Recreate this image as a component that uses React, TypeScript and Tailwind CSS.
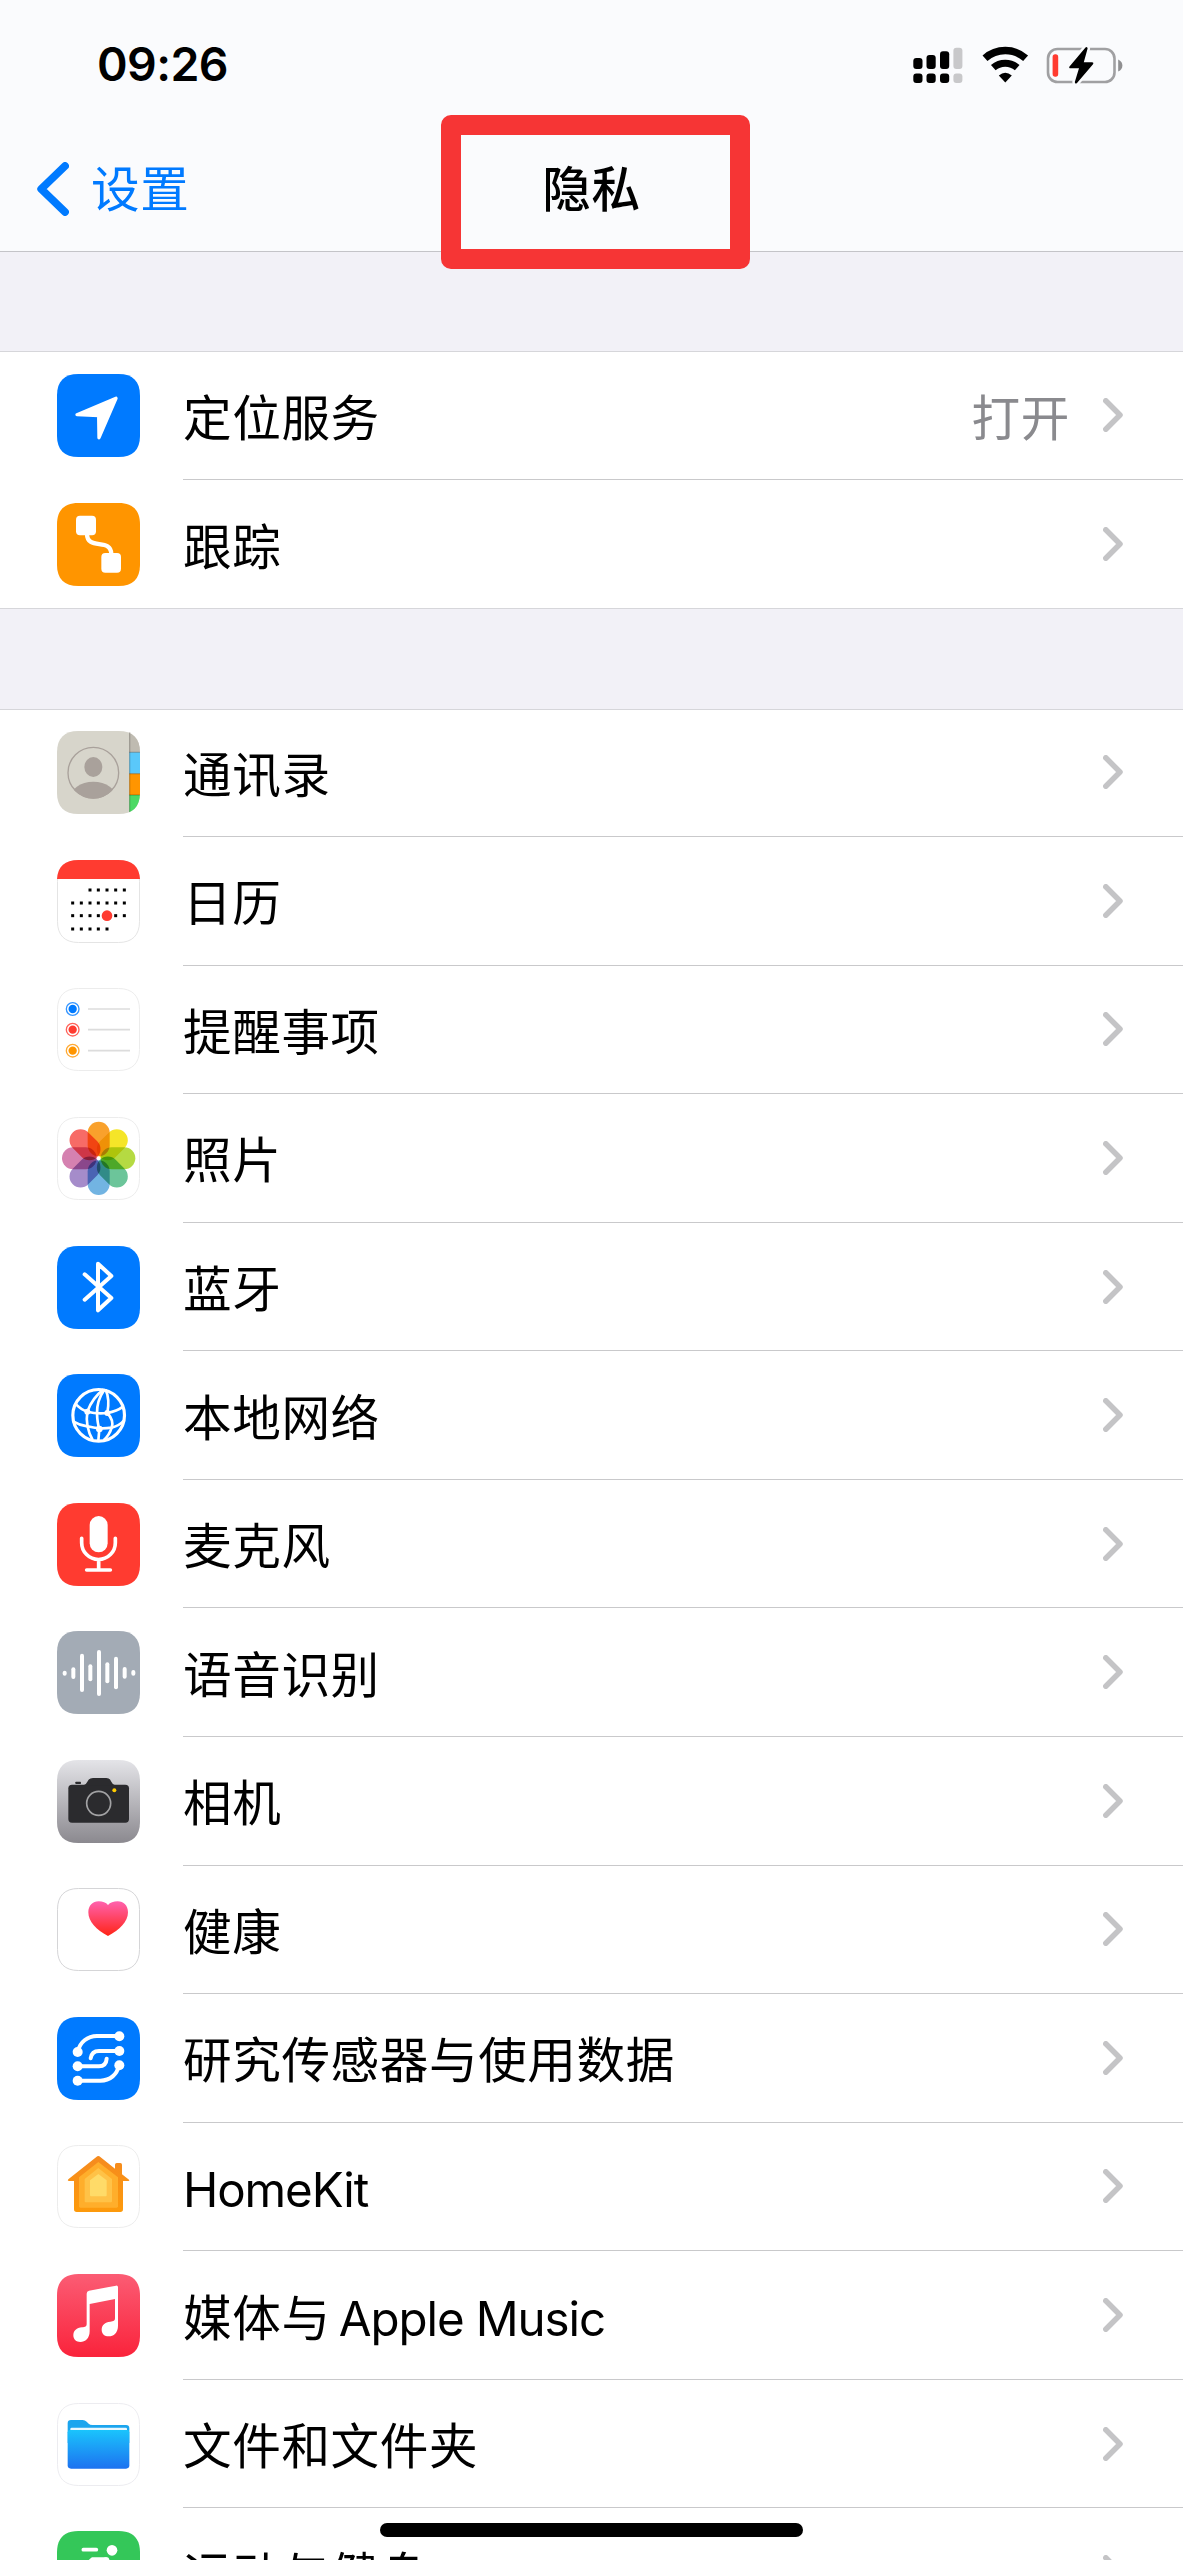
import type { ReactNode } from "react";

const TILE =
  "M64 0H185C227 0 249 22 249 64V185C249 227 227 249 185 249H64C22 249 0 227 0 185V64C0 22 22 0 64 0Z";

interface TileProps {
  fill?: string;
  outline?: string;
  children?: ReactNode;
}

function Tile({ fill = "#ffffff", outline, children }: TileProps) {
  return (
    <svg viewBox="0 0 249 249" className="size-[83px] shrink-0" fill="none">
      <path d={TILE} fill={fill} />
      {children}
      {outline && (
        <path
          d={TILE}
          stroke={outline}
          strokeWidth="3"
          transform="translate(1.5 1.5) scale(0.988)"
        />
      )}
    </svg>
  );
}

function LocationIcon() {
  return (
    <Tile fill="#007aff">
      <path
        d="M60 122L177 73L126 191L125 125Z"
        fill="#fff"
        stroke="#fff"
        strokeWidth="10"
        strokeLinejoin="round"
      />
    </Tile>
  );
}

function TrackingIcon() {
  return (
    <Tile fill="#ff9500">
      <rect x="57" y="38" width="60" height="59" rx="12" fill="#fff" />
      <rect x="133" y="150" width="59" height="59" rx="12" fill="#fff" />
      <path d="M90 92C90 145 163 102 163 154" stroke="#fff" strokeWidth="13" />
    </Tile>
  );
}

function ContactsIcon() {
  return (
    <Tile fill="#d7d5cb">
      <defs>
        <clipPath id="contacts-tile">
          <path d={TILE} />
        </clipPath>
        <clipPath id="contacts-face">
          <circle cx="109" cy="125" r="78" />
        </clipPath>
      </defs>
      <g clipPath="url(#contacts-tile)">
        <rect x="217" y="0" width="32" height="64" fill="#bfbbb1" />
        <rect x="217" y="64" width="32" height="64" fill="#5ac8fa" />
        <rect x="217" y="128" width="32" height="64" fill="#ff9500" />
        <rect x="217" y="192" width="32" height="57" fill="#4cd964" />
        <rect x="217" y="62" width="32" height="4" fill="#000" opacity="0.2" />
        <rect x="217" y="126" width="32" height="4" fill="#000" opacity="0.2" />
        <rect x="217" y="190" width="32" height="4" fill="#000" opacity="0.2" />
        <rect x="216" y="0" width="4" height="249" fill="#000" opacity="0.2" />
      </g>
      <circle cx="109" cy="125" r="76" stroke="#a9a19b" strokeWidth="4" />
      <ellipse cx="109" cy="108" rx="27" ry="30" fill="#a9a19b" />
      <ellipse
        cx="109"
        cy="203"
        rx="70"
        ry="51"
        fill="#a9a19b"
        clipPath="url(#contacts-face)"
      />
    </Tile>
  );
}

const CALENDAR_ROWS = [
  { y: 90, xs: [99, 124, 150, 176, 202] },
  { y: 129, xs: [47, 73, 99, 124, 150, 176, 202] },
  { y: 167, xs: [47, 73, 99, 124, 176, 202] },
  { y: 207, xs: [47, 73, 99, 124, 150] },
];

function CalendarIcon() {
  return (
    <Tile>
      <path
        d={TILE}
        stroke="#e4e4e4"
        strokeWidth="3"
        transform="translate(1.5 1.5) scale(0.988)"
      />
      <path d="M64 0H185C225 0 247 20 249 57H0C2 20 24 0 64 0Z" fill="#ff3b30" />
      {CALENDAR_ROWS.map((row) =>
        row.xs.map((x) => (
          <rect key={`${x}-${row.y}`} x={x - 4.5} y={row.y - 4.5} width="9" height="9" fill="#000" />
        ))
      )}
      <circle cx="150" cy="167" r="16" fill="#ff3b30" />
    </Tile>
  );
}

function RemindersIcon() {
  return (
    <Tile outline="#ececec">
      {[
        { y: 63, color: "#007aff" },
        { y: 125, color: "#ff3b30" },
        { y: 188, color: "#ff9500" },
      ].map(({ y, color }) => (
        <g key={color}>
          <circle cx="47" cy={y} r="19" stroke={color} strokeWidth="4" opacity="0.8" />
          <circle cx="47" cy={y} r="12.5" fill={color} />
          <path d={`M93 ${y}H219`} stroke="#dcdcdc" strokeWidth="5" />
        </g>
      ))}
    </Tile>
  );
}

const PETALS = [
  "#f9a12c",
  "#f5e528",
  "#b5da42",
  "#6cc59a",
  "#72b4e2",
  "#a58cca",
  "#d581b0",
  "#f76b66",
];

function PhotosIcon() {
  return (
    <Tile outline="#ececec">
      <g className="isolate">
        {PETALS.map((color, i) => (
          <rect
            key={color}
            x="92"
            y="14"
            width="66"
            height="104"
            rx="33"
            fill={color}
            transform={`rotate(${i * 45} 125 124)`}
            className="mix-blend-multiply"
          />
        ))}
      </g>
    </Tile>
  );
}

function BluetoothIcon() {
  return (
    <Tile fill="#007aff">
      <path
        d="M83 85L163 156L123 193V53L163 90L83 161"
        stroke="#fff"
        strokeWidth="12"
        strokeLinecap="round"
        strokeLinejoin="round"
      />
    </Tile>
  );
}

function NetworkIcon() {
  return (
    <Tile fill="#007aff">
      <g stroke="#fff" strokeWidth="8">
        <circle cx="125" cy="124" r="77.5" strokeWidth="9.5" />
        <path d="M54 88Q72 107 91 113Q121 121 151 117Q180 112 198 98" />
        <path d="M48 142Q68 154 91 157Q127 167 164 161Q188 155 202 138" />
        <path d="M139 47Q106 72 91 113Q84 157 107 198" />
        <path d="M142 47Q119 80 120 118Q121 148 127 165L124 200" />
        <path d="M146 47Q159 76 151 117Q172 140 164 161Q158 182 140 199" />
      </g>
      <g fill="#fff">
        <circle cx="91" cy="113" r="9" />
        <circle cx="151" cy="117" r="9" />
        <circle cx="127" cy="165" r="10" />
      </g>
    </Tile>
  );
}

function MicrophoneIcon() {
  return (
    <Tile fill="#ff3b30">
      <rect x="98" y="39" width="54" height="109" rx="27" fill="#fff" />
      <path
        d="M74 106V119A50.5 50.5 0 0 0 175 119V106M125 170V201M89 201H160"
        stroke="#fff"
        strokeWidth="11"
        strokeLinecap="round"
      />
    </Tile>
  );
}

const WAVE_BARS = [
  [23, 119, 134],
  [49, 109, 144],
  [75, 68, 183],
  [100, 100, 151],
  [126, 57, 195],
  [151, 94, 157],
  [177, 77, 175],
  [203, 108, 143],
  [229, 117, 134],
];

function SpeechIcon() {
  return (
    <Tile fill="#a3abb5">
      {WAVE_BARS.map(([x, top, bottom]) => (
        <rect key={x} x={x - 6} y={top} width="12" height={bottom - top} rx="6" fill="#fff" />
      ))}
    </Tile>
  );
}

function CameraIcon() {
  return (
    <Tile fill="url(#camera-bg)">
      <defs>
        <linearGradient id="camera-bg" x1="0" y1="0" x2="0" y2="1">
          <stop offset="0" stopColor="#e4e4e8" />
          <stop offset="1" stopColor="#8b898f" />
        </linearGradient>
      </defs>
      <g fill="#2b2b2e">
        <rect x="34" y="74" width="182" height="114" rx="11" />
        <path d="M80 76Q88 73 92 64Q97 54 108 54H148Q158 54 162 64Q166 73 174 76Z" />
        <rect x="55" y="65" width="17" height="7" rx="2" />
      </g>
      <circle cx="125" cy="130" r="36" stroke="#a2a2a4" strokeWidth="5" />
      <circle cx="172" cy="91" r="6" fill="#ffcc00" />
    </Tile>
  );
}

function HealthIcon() {
  return (
    <Tile outline="#d4d4d6">
      <defs>
        <linearGradient id="heart" x1="0" y1="0" x2="0" y2="1">
          <stop offset="0" stopColor="#ff62ae" />
          <stop offset="1" stopColor="#ff2416" />
        </linearGradient>
      </defs>
      <path
        d="M153 144C118 126 94 101 94 73C94 53 107 40 125 40C137 40 147 44 153 51C159 44 170 40 182 40C200 40 213 53 213 73C213 101 188 126 153 144Z"
        fill="url(#heart)"
      />
    </Tile>
  );
}

function ResearchIcon() {
  return (
    <Tile fill="#007aff">
      <path
        d="M62 105C68 75 92 57 120 57H187M101 124C103 110 112 102 126 102H186M62 148H126C140 148 148 140 149 125M62 191H130C160 191 180 172 186 145"
        stroke="#fff"
        strokeWidth="12"
        strokeLinecap="round"
      />
      <g fill="#fff">
        <circle cx="187" cy="58" r="15" />
        <circle cx="62" cy="105" r="15" />
        <circle cx="187" cy="102" r="15" />
        <circle cx="62" cy="148" r="15" />
        <circle cx="187" cy="145" r="15" />
        <circle cx="62" cy="191" r="15" />
      </g>
    </Tile>
  );
}

function HomeKitIcon() {
  return (
    <Tile outline="#ececec">
      <defs>
        <linearGradient id="house" x1="0" y1="0" x2="0" y2="1">
          <stop offset="0" stopColor="#f58a1f" />
          <stop offset="1" stopColor="#fd9a0b" />
        </linearGradient>
      </defs>
      <path
        d="M124 33Q127 33 130 36L174 71V59Q174 54 179 54H190Q195 54 195 59V88L216 104Q219 108 214 108H198V193Q198 201 190 201H59Q51 201 51 193V108H35Q30 107 34 103L118 36Q121 33 124 33Z"
        fill="url(#house)"
      />
      <path d="M124 51L183 97V184Q183 188 179 188H70Q66 188 66 184V97Z" fill="#ffae2b" />
      <path d="M124 69L165 102V169Q165 172 162 172H86Q83 172 83 169V102Z" fill="#ffc247" />
      <path d="M124 87L149 106V151Q149 154 146 154H102Q99 154 99 151V106Z" fill="#ffdb68" />
    </Tile>
  );
}

function MusicIcon() {
  return (
    <Tile fill="url(#music-bg)">
      <defs>
        <linearGradient id="music-bg" x1="0" y1="0" x2="0" y2="1">
          <stop offset="0" stopColor="#fb5c74" />
          <stop offset="1" stopColor="#fa233b" />
        </linearGradient>
      </defs>
      <path
        d="M96 50L177 35Q183 34 183 40V155C183 176 170 187 155 187C143 187 134 180 134 167C134 152 144 145 160 143C170 142 174 140 174 132V75L98 90V172C98 193 85 204 70 204C58 204 49 197 49 184C49 169 59 162 75 160C85 159 89 157 89 149V59Q89 51 96 50Z"
        fill="#fff"
      />
    </Tile>
  );
}

function FilesIcon() {
  return (
    <Tile outline="#ececf0">
      <defs>
        <linearGradient id="folder" x1="0" y1="0" x2="0" y2="1">
          <stop offset="0" stopColor="#1ac4fc" />
          <stop offset="1" stopColor="#1d72f0" />
        </linearGradient>
      </defs>
      <path
        d="M32 61Q32 51 42 51H77Q84 51 89 56L95 62Q99 66 106 66H207Q217 66 217 76V120H32Z"
        fill="#1ba5ee"
      />
      <rect x="40" y="74" width="170" height="16" rx="4" fill="#e8f7ff" />
      <path
        d="M32 88Q32 81 39 81H210Q217 81 217 88V187Q217 197 207 197H42Q32 197 32 187Z"
        fill="url(#folder)"
      />
    </Tile>
  );
}

function FitnessIcon() {
  return (
    <Tile fill="#34c759">
      <g stroke="#fff" strokeLinecap="round" strokeLinejoin="round">
        <path d="M79 56H118" strokeWidth="11" />
        <path d="M78 112L106 85H150" strokeWidth="12" />
        <path d="M146 92L122 132L150 160V200" strokeWidth="26" />
        <path d="M160 100L176 122H204M112 146L98 172H60" strokeWidth="12" />
      </g>
      <circle cx="165" cy="58" r="16" fill="#fff" />
    </Tile>
  );
}

function Chevron() {
  return (
    <svg viewBox="0 0 20 34" className="h-[34px] w-5 shrink-0" fill="none">
      <path
        d="M2.8 2.8L17 17L2.8 31.2"
        stroke="#c4c4c6"
        strokeWidth="5.5"
        strokeLinecap="round"
        strokeLinejoin="round"
      />
    </svg>
  );
}

function Latin({ children }: { children: ReactNode }) {
  return <span className="text-[47.5px] tracking-[-1.1px]">{children}</span>;
}

interface RowProps {
  icon: ReactNode;
  label: ReactNode;
  value?: string;
  last?: boolean;
}

function Row({ icon, label, value, last }: RowProps) {
  return (
    <li className="flex h-[128.57px] items-center pl-[57px]">
      {icon}
      <div
        className={
          last
            ? "ml-[43px] flex h-full flex-1 items-center pr-[60px]"
            : "ml-[43px] flex h-full flex-1 items-center border-b border-[#c9c9cb] pr-[60px]"
        }
      >
        <span className="flex-1 whitespace-pre pt-[7px]">{label}</span>
        {value && <span className="mr-[33px] pt-[7px] text-[#8a8a8e]">{value}</span>}
        <Chevron />
      </div>
    </li>
  );
}

function StatusIcons() {
  return (
    <svg viewBox="0 0 212 40" className="h-10 w-[212px]" fill="none">
      {/* dual sim signal */}
      <g fill="#000">
        <rect x="1.3" y="13" width="9.2" height="11" rx="3" />
        <rect x="14.5" y="10" width="9.2" height="14" rx="3" />
        <rect x="28" y="6.2" width="9.2" height="17.8" rx="3" />
        <rect x="1.3" y="28.5" width="9.2" height="9.4" rx="3" />
        <rect x="14.5" y="28.5" width="9.2" height="9.4" rx="3" />
        <rect x="28" y="28.5" width="9.2" height="9.4" rx="3" />
      </g>
      <g fill="#c8c8ca">
        <rect x="41.4" y="2.8" width="9" height="21.2" rx="3" />
        <rect x="41.4" y="28.5" width="9" height="9.4" rx="3" />
      </g>
      {/* wifi */}
      <g transform="translate(0 1)">
        <path d="M73 12.3A30.5 30.5 0 0 1 113.6 12.3" stroke="#000" strokeWidth="7.4" />
        <path d="M81.3 21.7A18 18 0 0 1 105.2 21.7" stroke="#000" strokeWidth="7" />
        <path d="M86.8 29.6Q93.3 24 99.8 29.6L93.3 36.4Z" fill="#000" />
      </g>
      {/* battery */}
      <rect x="136" y="4" width="66.5" height="33" rx="9.5" stroke="#a0a0a2" strokeWidth="2.6" />
      <path d="M206.2 14.5Q210.4 16.5 210.4 20.5Q210.4 24.5 206.2 26.5Z" fill="#8f8f91" />
      <rect x="140.6" y="9.3" width="5.6" height="22.4" rx="2.6" fill="#ff3b30" />
      <path
        d="M173.5 2.5L157.5 21.5Q156.5 23.3 158.5 23.3H167L162.8 37Q163 39.5 165 38L181 19.3Q182 17.2 180 17.2H171.8L175.6 3.6Q175.4 1.2 173.5 2.5Z"
        fill="#000"
        stroke="#fafbfd"
        strokeWidth="5"
        paintOrder="stroke"
      />
    </svg>
  );
}

function Header() {
  return (
    <header className="relative h-[252px] shrink-0 border-b border-[#c4c4c8] bg-[#fafbfd]">
      <div className="flex h-[129px] items-center justify-between pl-[97px] pr-[59px]">
        <span className="text-[46.5px] font-semibold leading-none tracking-[-0.6px]">09:26</span>
        <StatusIcons />
      </div>
      <nav className="grid h-[119px] grid-cols-3 items-center">
        <a className="flex items-center pl-[37px] text-[#007aff]">
          <svg viewBox="0 0 32 54" className="h-[54px] w-8" fill="none">
            <path
              d="M28 4L4.2 27L28 50"
              stroke="#007aff"
              strokeWidth="7.8"
              strokeLinecap="round"
              strokeLinejoin="round"
            />
          </svg>
          <span className="ml-[22px] pt-[3px]">设置</span>
        </a>
        <h1 className="pt-[3px] text-center font-medium">隐私</h1>
      </nav>
      <div className="absolute left-[441px] top-[115px] h-[154px] w-[309px] rounded-[10px] border-20 border-[#f63535]" />
    </header>
  );
}

export default function App() {
  return (
    <div className="relative flex h-[2560px] w-[1183px] flex-col overflow-hidden bg-[#f2f1f7] font-['Inter','Noto_Sans_CJK_SC',sans-serif] text-[48.6px] leading-[60px] tracking-[0.6px] text-black">
      <Header />
      <ul className="mt-[99.4px] shrink-0 bg-white shadow-[inset_0_1px_#d6d6da,inset_0_-1px_#d6d6da]">
        <Row icon={<LocationIcon />} label="定位服务" value="打开" />
        <Row icon={<TrackingIcon />} label="跟踪" last />
      </ul>
      <ul className="mt-[100px] shrink-0 bg-white shadow-[inset_0_1px_#d6d6da]">
        <Row icon={<ContactsIcon />} label="通讯录" />
        <Row icon={<CalendarIcon />} label="日历" />
        <Row icon={<RemindersIcon />} label="提醒事项" />
        <Row icon={<PhotosIcon />} label="照片" />
        <Row icon={<BluetoothIcon />} label="蓝牙" />
        <Row icon={<NetworkIcon />} label="本地网络" />
        <Row icon={<MicrophoneIcon />} label="麦克风" />
        <Row icon={<SpeechIcon />} label="语音识别" />
        <Row icon={<CameraIcon />} label="相机" />
        <Row icon={<HealthIcon />} label="健康" />
        <Row icon={<ResearchIcon />} label="研究传感器与使用数据" />
        <Row icon={<HomeKitIcon />} label={<Latin>HomeKit</Latin>} />
        <Row
          icon={<MusicIcon />}
          label={
            <>
              <span className="-mr-1">媒体与</span>
              <Latin>{" Apple Music"}</Latin>
            </>
          }
        />
        <Row icon={<FilesIcon />} label="文件和文件夹" />
        <Row icon={<FitnessIcon />} label="运动与健身" />
      </ul>
      <div className="absolute bottom-[23px] left-[380px] h-[14px] w-[423px] rounded-full bg-black" />
    </div>
  );
}
